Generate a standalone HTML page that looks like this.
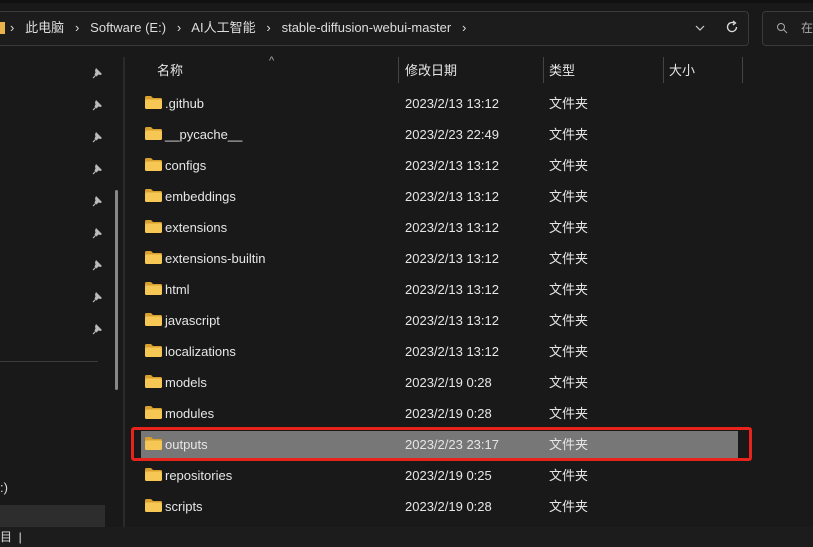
<!DOCTYPE html><html><head><meta charset="utf-8"><style>
*{margin:0;padding:0;box-sizing:border-box}
body{width:813px;height:547px;background:#191919;font-family:"Liberation Sans","Noto Sans CJK SC",sans-serif;color:#e6e6e6;position:relative;overflow:hidden;font-size:13px}
.a{position:absolute;white-space:nowrap;line-height:18px}
.fold{position:absolute;width:17px;height:13px}
</style></head><body>
<div class="a" style="left:0;top:0;width:813px;height:3px;background:#111"></div>
<div class="a" style="left:-5px;top:11px;width:754px;height:35px;border:1px solid #3a3a3a;border-radius:4px;background:#1c1c1c"></div>
<div class="a" style="left:0;top:22px;width:5px;height:12px;background:#e8b34a"></div>
<div class="a" style="left:10px;top:19px;font-size:13px;color:#ddd">›&nbsp;&nbsp; 此电脑 &nbsp;&nbsp;›&nbsp;&nbsp; Software (E:) &nbsp;&nbsp;›&nbsp;&nbsp; AI人工智能 &nbsp;&nbsp;›&nbsp;&nbsp; stable-diffusion-webui-master &nbsp;&nbsp;›</div>
<svg class="a" style="left:695px;top:25px" width="10" height="6" viewBox="0 0 10 6"><path d="M1 1L5 5L9 1" stroke="#ccc" fill="none" stroke-width="1.2"/></svg>
<svg class="a" style="left:725px;top:20px" width="14" height="14" viewBox="0 0 14 14"><path d="M11.5 7A4.5 4.5 0 1 1 9 3" stroke="#ddd" fill="none" stroke-width="1.3"/><path d="M8 1L10.5 3L8 5" stroke="#ddd" fill="none" stroke-width="1.3"/></svg>
<div class="a" style="left:762px;top:11px;width:60px;height:35px;border:1px solid #3a3a3a;border-radius:4px;background:#1c1c1c"></div>
<svg class="a" style="left:776px;top:22px" width="12" height="12" viewBox="0 0 12 12"><circle cx="5" cy="5" r="3.5" stroke="#aaa" fill="none"/><path d="M7.5 7.5L11 11" stroke="#aaa"/></svg>
<div class="a" style="left:801px;top:19px;color:#aaa;font-size:12px">在</div>

<div class="a" style="left:123px;top:57px;width:2px;height:470px;background:#2a2a2a"></div>
<div class="a" style="left:115px;top:190px;width:3px;height:200px;background:#888;border-radius:2px"></div>
<div class="a" style="left:0;top:361px;width:98px;height:1px;background:#3a3a3a"></div>
<div class="a" style="left:0;top:479px;color:#ddd">:)</div>
<div class="a" style="left:0;top:505px;width:105px;height:22px;background:#2d2d2d"></div>
<div class="a" style="left:0;top:527px;width:813px;height:20px;background:#1c1c1c"></div>
<div class="a" style="left:0;top:528px;font-size:12px;color:#ddd">目&nbsp;&nbsp;|</div>

<div class="a" style="left:157px;top:62px">名称</div>
<div class="a" style="left:269px;top:52px;font-size:11px;color:#aaa">^</div>
<div class="a" style="left:405px;top:62px">修改日期</div>
<div class="a" style="left:549px;top:62px">类型</div>
<div class="a" style="left:669px;top:62px">大小</div>
<div class="a" style="left:398px;top:57px;width:1px;height:26px;background:#444"></div>
<div class="a" style="left:543px;top:57px;width:1px;height:26px;background:#444"></div>
<div class="a" style="left:663px;top:57px;width:1px;height:26px;background:#444"></div>
<div class="a" style="left:742px;top:57px;width:1px;height:26px;background:#444"></div>

<div class="a" style="left:141px;top:431px;width:597px;height:27px;background:#777"></div>
<div class="a" style="left:131px;top:427px;width:621px;height:34px;border:3px solid #e8231c;border-radius:3px"></div>

<div id="rows"></div>
<script>
var r=[[".github","2023/2/13 13:12"],["__pycache__","2023/2/23 22:49"],["configs","2023/2/13 13:12"],["embeddings","2023/2/13 13:12"],["extensions","2023/2/13 13:12"],["extensions-builtin","2023/2/13 13:12"],["html","2023/2/13 13:12"],["javascript","2023/2/13 13:12"],["localizations","2023/2/13 13:12"],["models","2023/2/19 0:28"],["modules","2023/2/19 0:28"],["outputs","2023/2/23 23:17"],["repositories","2023/2/19 0:25"],["scripts","2023/2/19 0:28"]];
var h="";
r.forEach(function(e,i){var y=103+31*i;
h+='<svg class="fold" style="left:145px;top:'+(y-7)+'px" viewBox="0 0 17 13"><path d="M0 1.5Q0 0 1.5 0H6L8 2H15.5Q17 2 17 3.5V4H0Z" fill="#d9a030"/><rect x="0" y="3.5" width="17" height="9.5" rx="1.2" fill="#f6c755"/></svg>';
h+='<div class="a" style="left:165px;top:'+(y-8)+'px">'+e[0]+'</div><div class="a" style="left:405px;top:'+(y-8)+'px">'+e[1]+'</div><div class="a" style="left:549px;top:'+(y-8)+'px">文件夹</div>';});
for(var i=0;i<9;i++){h+='<svg class="a" style="left:92px;top:'+(67+32*i)+'px" width="11" height="12" viewBox="0 0 11 12"><path d="M4 1L10 7L8.5 8L6.5 7.5L4.5 9.5L2.5 7.5L3.5 5.5L3 3.5Z" fill="#bbb"/><path d="M3.5 8.5L1 11" stroke="#bbb" stroke-width="1.2"/></svg>'}
document.getElementById("rows").innerHTML=h;
</script>
</body></html>
